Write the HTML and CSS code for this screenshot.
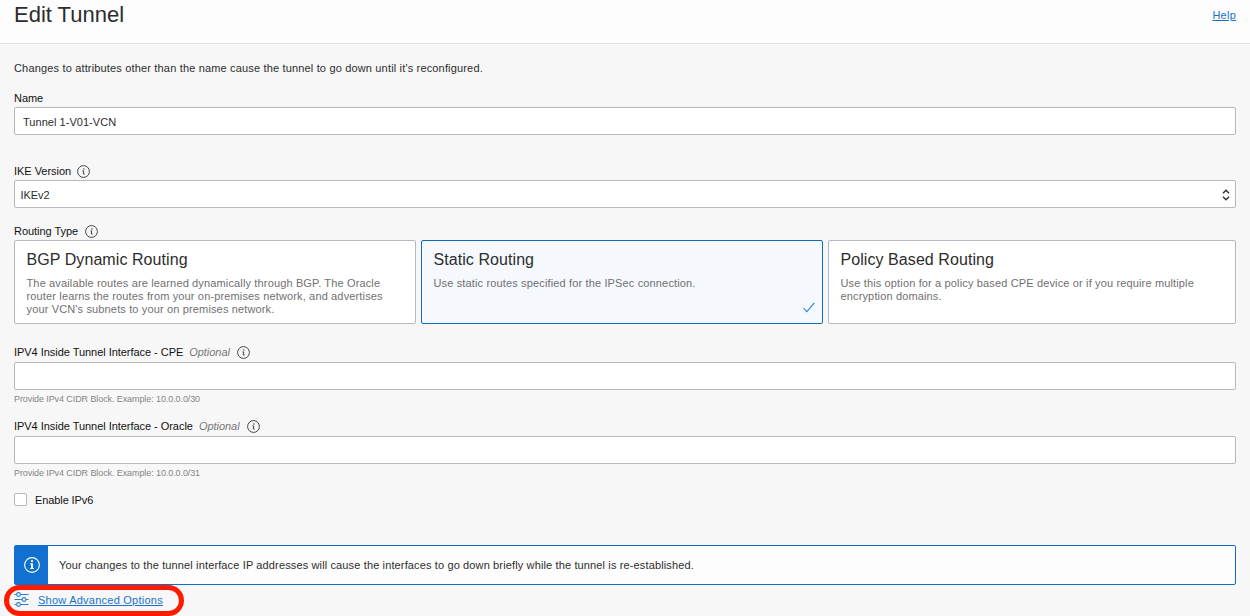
FILE: index.html
```html
<!DOCTYPE html>
<html lang="en">
<head>
  <meta charset="UTF-8" />
  <meta name="viewport" content="width=device-width, initial-scale=1.0"/>
  <title>Edit Tunnel</title>
  <link rel="stylesheet" href="styles.css">
</head>
<body>
  <svg class="defs" width="0" height="0">
    <symbol id="icon-info" viewBox="0 0 13 13">
      <circle cx="6.5" cy="6.5" r="5.9" fill="none" stroke="currentColor" stroke-width="1"/>
      <circle cx="6.9" cy="4" r="0.75" fill="currentColor"/>
      <path d="M5.4 5.9h1.3l-.4 3.1h1.4" fill="none" stroke="currentColor" stroke-width="1"/>
    </symbol>
  </svg>

  <header class="header">
    <h1>Edit Tunnel</h1>
    <a class="help" href="#">Help</a>
  </header>

  <form class="content">
    <p class="intro">Changes to attributes other than the name cause the tunnel to go down until it's reconfigured.</p>

    <div class="field name">
      <label for="name"><span>Name</span></label>
      <input type="text" id="name" name="name" value="Tunnel 1-V01-VCN" />
    </div>

    <div class="field ike">
      <label for="ike"><span>IKE Version</span> <svg class="info"><use href="#icon-info"/></svg></label>
      <div class="select" id="ike">
        <span>IKEv2</span>
        <svg width="8" height="12" viewBox="0 0 8 12"><path d="M1 4.2l3-2.9 3 2.9M1 7.8l3 2.9 3-2.9" fill="none" stroke="#333" stroke-width="1.5"/></svg>
      </div>
    </div>

    <div class="field routing">
      <label><span>Routing Type</span> <svg class="info"><use href="#icon-info"/></svg></label>
      <div class="cards">
        <div class="card">
          <h2>BGP Dynamic Routing</h2>
          <p>The available routes are learned dynamically through BGP. The Oracle<br>router learns the routes from your on-premises network, and advertises<br>your VCN's subnets to your on premises network.</p>
        </div>
        <div class="card selected">
          <h2>Static Routing</h2>
          <p>Use static routes specified for the IPSec connection.</p>
          <svg class="check" width="12" height="11" viewBox="0 0 12 11"><path d="M.6 6l3.2 3.7L11.4.8" fill="none" stroke="#2b83d3" stroke-width="1.1"/></svg>
        </div>
        <div class="card">
          <h2>Policy Based Routing</h2>
          <p>Use this option for a policy based CPE device or if you require multiple<br>encryption domains.</p>
        </div>
      </div>
    </div>

    <div class="field tunnel">
      <label for="cpe"><span>IPV4 Inside Tunnel Interface - CPE</span> <em>Optional</em> <svg class="info"><use href="#icon-info"/></svg></label>
      <input type="text" id="cpe" name="cpe" />
      <p class="hint">Provide IPv4 CIDR Block. Example: 10.0.0.0/30</p>
    </div>

    <div class="field tunnel">
      <label for="oracle"><span>IPV4 Inside Tunnel Interface - Oracle</span> <em>Optional</em> <svg class="info"><use href="#icon-info"/></svg></label>
      <input type="text" id="oracle" name="oracle" />
      <p class="hint">Provide IPv4 CIDR Block. Example: 10.0.0.0/31</p>
    </div>

    <label class="ipv6"><input type="checkbox" name="ipv6" /><span>Enable IPv6</span></label>

    <div class="alert">
      <div class="alert-icon">
        <svg width="16" height="16" viewBox="0 0 16 16">
          <circle cx="8" cy="8" r="7.4" fill="none" stroke="#fff" stroke-width="1.1"/>
          <path d="M7 3.2h2v1.8H7zM6.2 6.2H9v5.2H7V7.4h-.8zM6.2 11h3.7v1.1H6.2z" fill="#fff"/>
        </svg>
      </div>
      <p>Your changes to the tunnel interface IP addresses will cause the interfaces to go down briefly while the tunnel is re-established.</p>
    </div>

    <div class="advanced">
      <svg width="15" height="15" viewBox="0 0 15 15" fill="none" stroke="#2b7fcb" stroke-width="1.1">
        <path d="M.5 2.5h2M6.5 2.5h8M.5 7.5h7.5M12 7.5h2.5M.5 12.5h2M6.5 12.5h8"/>
        <circle cx="4.5" cy="2.5" r="1.9"/>
        <circle cx="10" cy="7.5" r="1.9"/>
        <circle cx="4.5" cy="12.5" r="1.9"/>
      </svg>
      <a href="#">Show Advanced Options</a>
    </div>
  </form>
</body>
</html>
```
FILE: styles.css
```css
* {
  box-sizing: border-box;
}

body {
  margin: 0;
  height: 616px;
  overflow: hidden;
  background: #f7f7f7;
  color: #2d2d2d;
  font-family: "Liberation Sans", Arial, Helvetica, sans-serif;
  font-size: 11px;
}

h1, h2, p {
  margin: 0;
  font-weight: normal;
}

a {
  color: #1672cc;
}

.defs {
  display: block;
}

.header {
  display: flex;
  justify-content: space-between;
  height: 44px;
  padding: 0 14px;
  background: #fdfdfd;
  border-bottom: 1px solid #e1e1e1;
}

h1 {
  font-size: 22px;
  line-height: 30px;
}

.help {
  line-height: 30px;
  letter-spacing: 0.25px;
}

.content {
  padding: 0 14px;
}

.intro {
  padding-top: 15px;
  line-height: 18px;
  letter-spacing: 0.165px;
}

.field label {
  display: flex;
  align-items: center;
  height: 18px;
  color: #111;
  letter-spacing: -0.04px;
}

.info {
  width: 13px;
  height: 13px;
  margin-left: 6px;
  color: #444;
}

.routing .info,
.tunnel .info {
  margin-left: 7px;
}

.field em {
  margin-left: 6px;
  color: #777;
}

.field input,
.select {
  display: block;
  width: 100%;
  height: 28px;
  padding: 1px 8px 0;
  border: 1px solid #b3b8c1;
  border-radius: 2px;
  background: #fff;
  color: #2d2d2d;
  font: inherit;
  letter-spacing: 0.04px;
}

.select {
  display: flex;
  align-items: center;
  justify-content: space-between;
  padding: 1px 5px 0 5.5px;
  letter-spacing: -0.05px;
}

.name {
  margin-top: 12px;
}

.ike {
  margin-top: 27px;
}

.routing {
  margin-top: 14px;
}

.cards {
  display: grid;
  grid-template-columns: 402px 402px 1fr;
  gap: 5px;
}

.card {
  position: relative;
  height: 84px;
  padding: 8px 11.5px;
  border: 1px solid #b3b8c1;
  border-radius: 2px;
  background: #fff;
  white-space: nowrap;
}

.card.selected {
  border-color: #0d6cbf;
  background: #f5f9fe;
}

h2 {
  font-size: 16px;
  line-height: 21px;
  letter-spacing: 0.07px;
}

.card p {
  margin-top: 7px;
  color: #707070;
  line-height: 13px;
  letter-spacing: 0.145px;
}

.check {
  position: absolute;
  right: 7px;
  bottom: 10px;
}

.tunnel {
  height: 74px;
}

.routing + .tunnel {
  margin-top: 19px;
}

.tunnel label {
  margin-bottom: 1px;
}

.hint {
  color: #858585;
  font-size: 9px;
  line-height: 18px;
  letter-spacing: -0.09px;
}

.ipv6 {
  display: flex;
  align-items: center;
  height: 18px;
  margin-top: -1px;
  color: #111;
  letter-spacing: -0.1px;
}

.ipv6 input {
  appearance: none;
  width: 13px;
  height: 13px;
  margin: 0 8px 0 0;
  border: 1px solid #b3b8c1;
  border-radius: 2px;
  background: #fff;
}

.ipv6 span {
  padding-top: 2px;
}

.alert {
  display: flex;
  align-items: center;
  height: 40px;
  margin-top: 37px;
  border: 1px solid #0e6dcd;
  border-radius: 2px;
  background: #fdfdfd;
  letter-spacing: 0.133px;
}

.alert-icon {
  display: flex;
  align-items: center;
  justify-content: center;
  width: 33px;
  height: 38px;
  margin-right: 11px;
  padding-left: 1px;
  background: #1270d0;
}

.advanced {
  display: flex;
  align-items: center;
  gap: 9px;
  width: 180px;
  height: 31px;
  margin-left: -10px;
  padding: 0 0 2px 5px;
  border: 5px solid #ff1a00;
  border-radius: 16px;
  white-space: nowrap;
  letter-spacing: 0.24px;
}
```
